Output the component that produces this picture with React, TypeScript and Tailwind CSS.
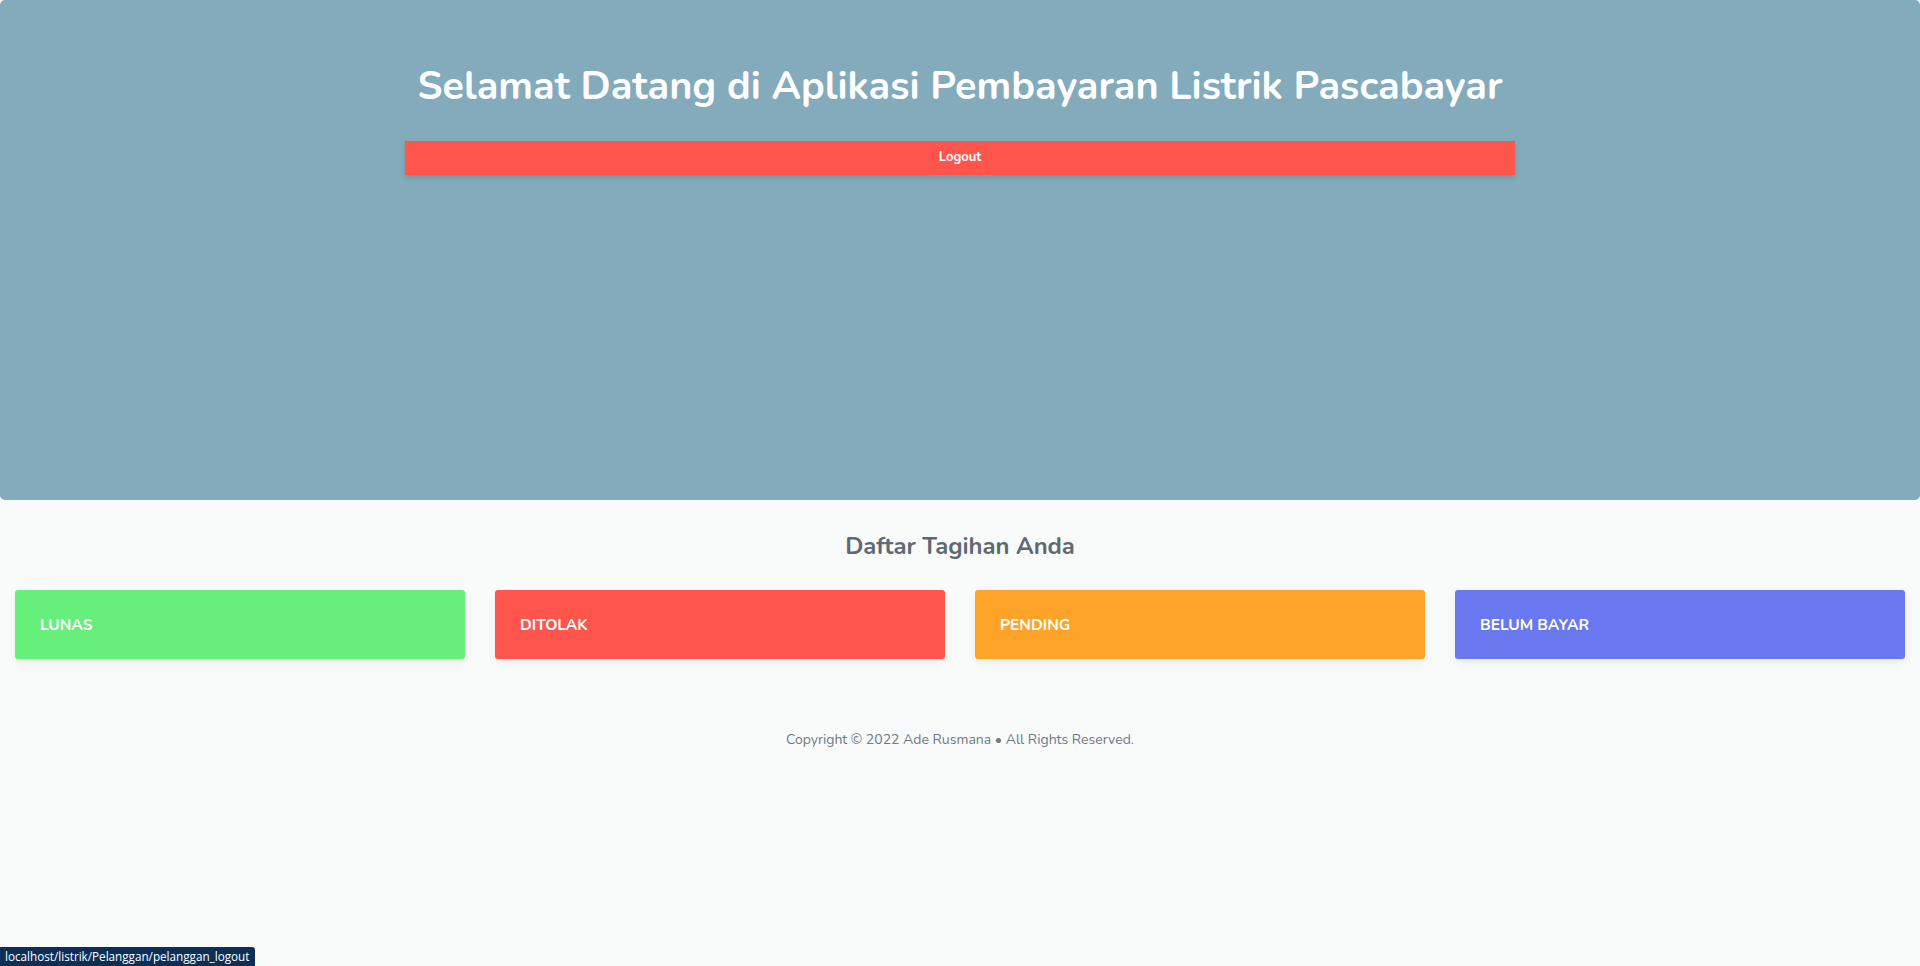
const cards = [
  { label: "LUNAS", color: "bg-[#66ef7b]" },
  { label: "DITOLAK", color: "bg-[#ff554c]" },
  { label: "PENDING", color: "bg-[#ffa428]" },
  { label: "BELUM BAYAR", color: "bg-[#6a78f0]" },
]

export default function App() {
  return (
    <div className="min-h-[966px] bg-[#f9fbfb] font-['Nunito','Lato',sans-serif]">
      <header className="h-[500px] bg-[#83abbc] rounded-[5px] pt-[62px]">
        <div className="mx-auto w-[1110px]">
          <h1 className="text-center text-white text-[39.6px] leading-[48px] font-bold">
            Selamat Datang di Aplikasi Pembayaran Listrik Pascabayar
          </h1>
          <a
            href="#"
            className="mt-[31px] flex h-[34px] items-center justify-center bg-[#ff554c] text-white text-[13px] font-bold shadow-[0_3px_5px_rgba(0,0,0,0.12)]"
          >
            Logout
          </a>
        </div>
      </header>

      <section className="pt-[31px]">
        <h3 className="text-center text-[23.8px] leading-[30px] font-bold text-[#5f6973]">
          Daftar Tagihan Anda
        </h3>
        <div className="mt-[29px] grid grid-cols-4 gap-[30px] px-[15px]">
          {cards.map((c) => (
            <div
              key={c.label}
              className={`${c.color} h-[69px] rounded-[3px] flex items-center px-[25px] text-white text-[15.5px] font-bold shadow-[0_4px_10px_rgba(0,0,0,0.06)]`}
            >
              {c.label}
            </div>
          ))}
        </div>
      </section>

      <footer className="mt-[70px] text-center text-[14px] text-[#6e7a84]">
        Copyright © 2022 Ade Rusmana • All Rights Reserved.
      </footer>

      <div className="fixed bottom-0 left-0 h-[19px] pl-[5px] pr-[6px] flex items-center bg-[#0c2f58] text-white text-[11.7px] rounded-tr-[3px] font-['Open_Sans','Liberation_Sans',sans-serif]">
        localhost/listrik/Pelanggan/pelanggan_logout
      </div>
    </div>
  )
}
